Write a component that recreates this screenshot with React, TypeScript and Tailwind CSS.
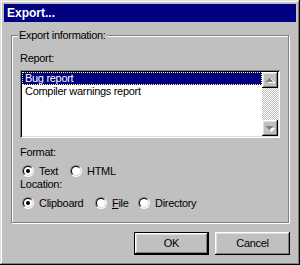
import React from "react";

const raised =
  "shadow-[inset_-1px_-1px_#000,inset_1px_1px_#fff,inset_-2px_-2px_#808080,inset_2px_2px_#dfdfdf]";

function Radio({ checked }: { checked?: boolean }) {
  return (
    <div className="w-[12px] h-[12px] rounded-full border border-t-[#808080] border-l-[#808080] border-r-white border-b-white shrink-0">
      <div className="w-[10px] h-[10px] rounded-full border border-t-black border-l-black border-r-[#dfdfdf] border-b-[#dfdfdf] bg-white flex items-center justify-center">
        {checked && <div className="w-[4px] h-[4px] rounded-full bg-black" />}
      </div>
    </div>
  );
}

function Option({ w, checked, children }: { w?: string; checked?: boolean; children: React.ReactNode }) {
  return (
    <div className={`flex items-center gap-[5px] ${w ?? ""}`}>
      <Radio checked={checked} />
      <span className="leading-[13px]">{children}</span>
    </div>
  );
}

function ArrowUp() {
  return (
    <svg width="16" height="16" viewBox="0 0 16 16" shapeRendering="crispEdges">
      <path d="M8 6h1v1h1v1h1v1h1v1H5V9h1V8h1V7h1z" fill="#fff" transform="translate(1 1)" />
      <path d="M7 6h1v1h1v1h1v1h1v1H4V9h1V8h1V7h1z" fill="#808080" />
    </svg>
  );
}

function ArrowDown() {
  return (
    <svg width="16" height="16" viewBox="0 0 16 16" shapeRendering="crispEdges">
      <path d="M5 7h7v1h-1v1h-1v1h-1v1H8v-1H7V9H6V8H5z" fill="#fff" transform="translate(1 1)" />
      <path d="M4 6h7v1h-1v1H9v1H8v1H7V9H6V8H5V7H4z" fill="#808080" />
    </svg>
  );
}

export default function App() {
  return (
    <div className="w-[300px] h-[265px] bg-[#c0c0c0] p-[4px] flex flex-col font-['Liberation_Sans',Arial,sans-serif] text-[11px] tracking-[-0.3px] text-black shadow-[inset_-1px_-1px_#000,inset_1px_1px_#dfdfdf,inset_-2px_-2px_#808080,inset_2px_2px_#fff]">
      <div className="h-[18px] bg-[#000080] text-white font-bold text-[12px] tracking-[0px] pl-[3px] flex items-center leading-none">
        Export...
      </div>

      <div className="relative mt-[13px] ml-[7px] mr-[7px] h-[188px] border border-[#808080] shadow-[inset_1px_1px_#fff,1px_1px_#fff] pt-[16px] pl-[8px] pr-[8px] flex flex-col">
        <div className="absolute left-[6px] top-[-7px] px-[1px] bg-[#c0c0c0] leading-[13px]">
          Export information:
        </div>
        <div className="leading-[13px] h-[13px]">Report:</div>
        <div className="mt-[5px] w-[260px] h-[68px] bg-white p-[2px] shadow-[inset_1px_1px_#808080,inset_-1px_-1px_#fff,inset_2px_2px_#000,inset_-2px_-2px_#dfdfdf] flex">
          <div className="flex-1 flex flex-col">
            <div className="h-[13px] bg-[#000080] text-white border border-dotted border-[#ffff80] pl-[2px] leading-[11px]">
              Bug report
            </div>
            <div className="h-[13px] pl-[3px] leading-[13px]">Compiler warnings report</div>
          </div>
          <div className="w-[16px] flex flex-col">
            <div className={`w-[16px] h-[16px] bg-[#c0c0c0] ${raised}`}>
              <ArrowUp />
            </div>
            <div className="flex-1 bg-[repeating-conic-gradient(#c0c0c0_0_25%,#fff_0_50%)] bg-[length:2px_2px]" />
            <div className={`w-[16px] h-[16px] bg-[#c0c0c0] ${raised}`}>
              <ArrowDown />
            </div>
          </div>
        </div>
        <div className="mt-[8px] leading-[13px] h-[13px]">Format:</div>
        <div className="mt-[5px] h-[14px] flex items-center pl-[2px]">
          <Option w="w-[48px]" checked>Text</Option>
          <Option>HTML</Option>
        </div>
        <div className="leading-[13px] h-[13px]">Location:</div>
        <div className="mt-[5px] h-[14px] flex items-center pl-[2px]">
          <Option w="w-[73px]" checked>Clipboard</Option>
          <Option w="w-[43px]">
            <span className="underline">F</span>ile
          </Option>
          <Option>Directory</Option>
        </div>
      </div>

      <div className="mt-[9px] flex justify-end pr-[6px] gap-[6px]">
        <div className="w-[75px] h-[23px] border border-black">
          <div className={`w-full h-full flex items-center justify-center ${raised}`}>OK</div>
        </div>
        <div className={`w-[75px] h-[23px] flex items-center justify-center ${raised}`}>Cancel</div>
      </div>
    </div>
  );
}
